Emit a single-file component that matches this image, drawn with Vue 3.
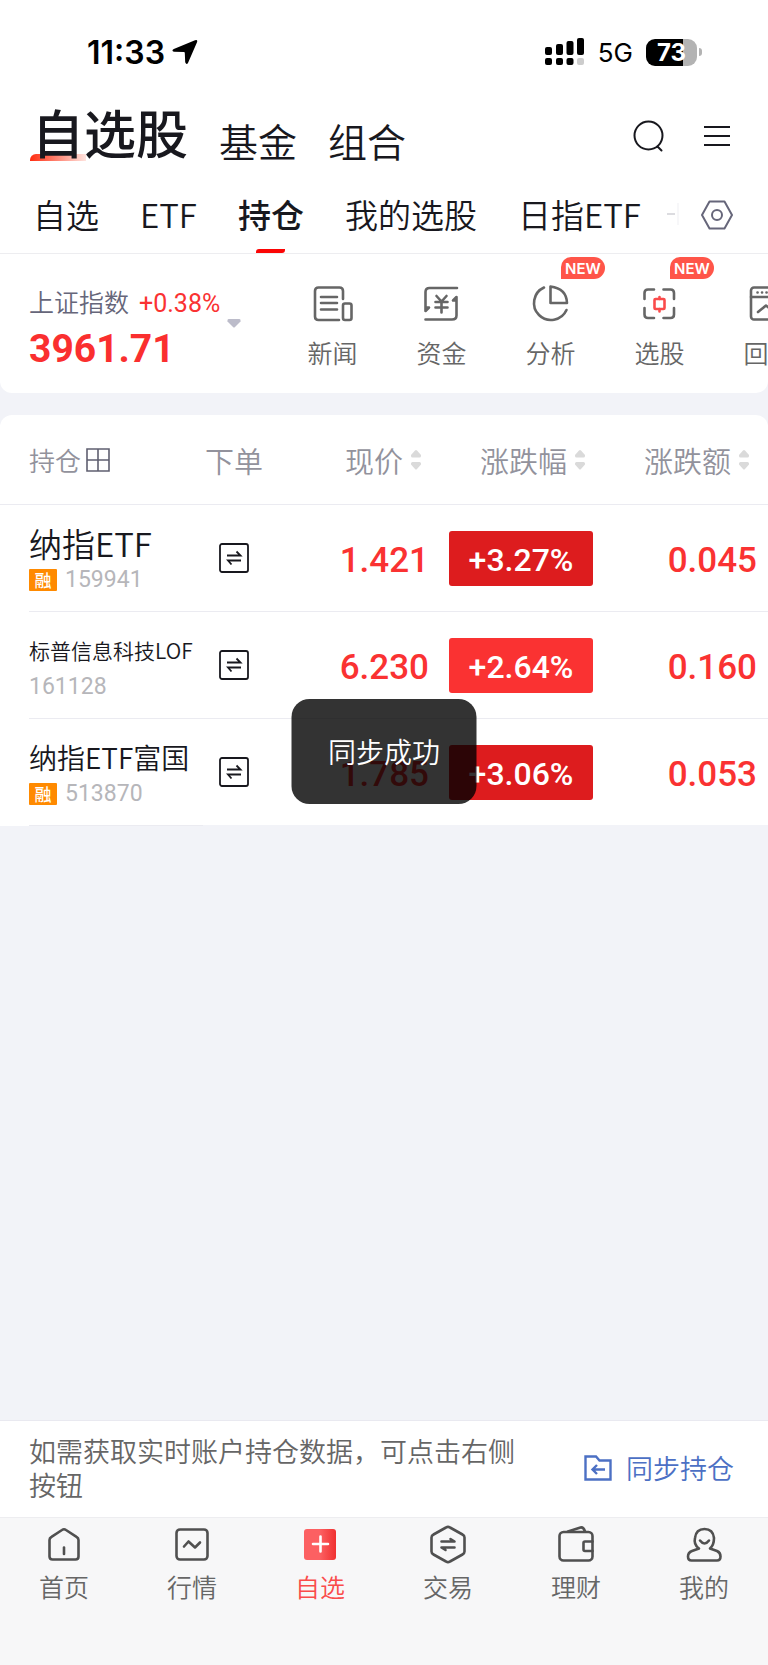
<script setup>
import { ref } from 'vue'

const markets = ['自选股', '基金', '组合']
const groups = ['自选', 'ETF', '持仓', '我的选股', '日指ETF']
const activeMarket = ref('自选股')
const activeGroup = ref('持仓')
const activeNav = ref('自选')

const tools = [
  { name: '新闻', icon: 'news' },
  { name: '资金', icon: 'fund' },
  { name: '分析', icon: 'pie', fresh: true },
  { name: '选股', icon: 'pick', fresh: true },
  { name: '回测', icon: 'test' },
]

const sortable = ['现价', '涨跌幅', '涨跌额']

const holdings = [
  { name: '纳指ETF', size: 'large', margin: true, code: '159941', price: '1.421', rate: '+3.27%', diff: '0.045', deep: true },
  { name: '标普信息科技LOF', size: 'small', margin: false, code: '161128', price: '6.230', rate: '+2.64%', diff: '0.160', deep: false },
  { name: '纳指ETF富国', size: 'medium', margin: true, code: '513870', price: '1.785', rate: '+3.06%', diff: '0.053', deep: true },
]

const navs = ['首页', '行情', '自选', '交易', '理财', '我的']
</script>

<template>
  <div class="page">
    <header class="top">
      <div class="status">
        <div class="clock">
          <span>11:33</span>
          <svg width="26" height="26" viewBox="0 0 26 26"><path d="M23 1.200Q26 .4 25 3.200L16.200 23.400Q14.600 26.500 13.200 23.200L12.800 14Q12.700 13.200 12 13.100L2 12.800Q-1 11.800 1.800 9.900Z" fill="#000" /></svg>
        </div>
        <div class="radio">
          <svg width="40" height="28" viewBox="0 0 40 28">
            <g fill="#000">
              <rect x="0" y="9" width="7" height="8" rx="2" /><rect x="11" y="6" width="7" height="11" rx="2" />
              <rect x="21.500" y="3" width="7" height="14" rx="2" /><rect x="32" y="0" width="7" height="17" rx="2" />
              <rect x="0" y="20" width="7" height="7" rx="2" /><rect x="11" y="20" width="7" height="7" rx="2" /><rect x="21.500" y="20" width="7" height="7" rx="2" />
            </g>
            <rect x="32" y="20" width="7" height="7" rx="2" fill="#ccc" />
          </svg>
          <span class="network">5G</span>
          <span class="battery">73</span>
        </div>
      </div>

      <div class="markets">
        <button v-for="m in markets" :key="m" type="button" class="market" :class="{ on: m === activeMarket }" @click="activeMarket = m"><span>{{ m }}</span></button>
        <button type="button" class="icon-button search" aria-label="搜索">
          <svg width="32" height="34" viewBox="0 0 32 34" fill="none" stroke="#18181e" stroke-width="2" stroke-linecap="round"><circle cx="15.500" cy="16.500" r="14" /><path d="M24.500 27.500L28.500 31.500" /></svg>
        </button>
        <button type="button" class="icon-button" aria-label="菜单">
          <svg width="26" height="22" viewBox="0 0 26 22" stroke="#18181e" stroke-width="2"><path d="M0 2H26M0 11H26M0 20H26" /></svg>
        </button>
      </div>

      <nav class="groups">
        <button v-for="g in groups" :key="g" type="button" class="group" :class="{ on: g === activeGroup }" @click="activeGroup = g">{{ g }}</button>
        <svg class="more" width="14" height="26" viewBox="0 0 14 26"><path d="M1 13H9" stroke="#dcdce0" stroke-width="2" /><path d="M12 2V24" stroke="#f5f5f7" stroke-width="1.500" /></svg>
        <button type="button" class="icon-button" aria-label="设置">
          <svg width="32" height="30" viewBox="0 0 32 30" fill="none" stroke="#66667a" stroke-width="2" stroke-linejoin="round"><path d="M8.500 1.500H23.500L31 15L23.500 28.500H8.500L1 15Z" /><circle cx="16" cy="15" r="5" /></svg>
        </button>
      </nav>
    </header>

    <section class="overview">
      <button type="button" class="quote">
        <span class="quote-text">
          <span class="quote-head"><span>上证指数</span><span class="quote-rate">+0.38%</span></span>
          <strong>3961.71</strong>
        </span>
        <svg class="caret" width="14" height="9" viewBox="0 0 14 9"><path d="M1.500 0H12.500Q14 .3 13.500 2.500L8 8Q7 9 6 8L.5 2.500Q0 .3 1.500 0Z" fill="#bcbcca" /></svg>
      </button>
      <div class="tools">
        <button v-for="t in tools" :key="t.name" type="button" class="tool">
          <svg width="40" height="40" viewBox="0 0 40 40" fill="none" stroke="#666" stroke-width="2.600" stroke-linecap="round" stroke-linejoin="round">
            <template v-if="t.icon === 'news'">
              <path d="M30 15V7Q30 3.500 26.500 3.500H5.500Q2 3.500 2 7V32.500Q2 36 5.500 36H26" />
              <path d="M8 13H24M8 19H24M8 25.500H24" />
              <rect x="30" y="19.500" width="8.500" height="16.500" rx="2" />
            </template>
            <template v-else-if="t.icon === 'fund'">
              <path d="M35 4H7.500Q3.500 4 3.500 8V27L7 23.500H3.500M3.500 35.500H30Q34.500 35.500 34.500 31.500V13L31 16.500H34.500" />
              <path d="M14.500 12L19.500 17.500L24.500 12M13.500 18H25.500M13.500 23.500H25.500M19.500 18V28.500" />
            </template>
            <template v-else-if="t.icon === 'pie'">
              <path d="M13 3.500A17 17 0 1 0 35.500 26" /><path d="M19.500 2.500V19H36Q35.500 4.500 19.500 2.500Z" />
            </template>
            <template v-else-if="t.icon === 'pick'">
              <path d="M4.500 15V9Q4.500 5.500 8 5.500H14M23.500 5.500H30.500Q34 5.500 34 9V15M34 24V30.500Q34 34 30.500 34H23.500M14 34H8Q4.500 34 4.500 30.500V24" />
              <g stroke="#fa4b4b"><rect x="14.500" y="15" width="10" height="10" rx="1" /><path d="M19.500 13V15M19.500 25V27.500" /></g>
            </template>
            <template v-else>
              <rect x="2" y="3.500" width="33" height="32" rx="3" /><path d="M2 13H35M9 28L17 21.500L23 26L30 19" />
              <path d="M8.500 8.500H8.600M13 8.500H13.100M17.500 8.500H17.600" />
            </template>
          </svg>
          <span>{{ t.name }}</span>
          <em v-if="t.fresh" class="fresh">NEW</em>
        </button>
      </div>
    </section>

    <section class="holdings">
      <table>
        <colgroup><col /><col class="col-order" /><col class="col-num" /><col class="col-num" /><col class="col-num" /><col class="col-end" /></colgroup>
        <thead>
          <tr>
            <th scope="col" class="th-name">
              <button type="button">持仓<svg width="24" height="24" viewBox="0 0 24 24" fill="none" stroke="#5f5f70" stroke-width="1.600"><path d="M1 1H23V23H1ZM12 1V23M1 12H23" /></svg></button>
            </th>
            <th scope="col" class="th-order">下单</th>
            <th v-for="s in sortable" :key="s" scope="col" class="th-num">
              <button type="button">{{ s }}<svg width="10" height="20" viewBox="0 0 10 20" fill="#dadada"><path d="M5 0Q5.500 0 6 .5L10 5V6Q10 7.500 8.500 7.500H1.500Q0 7.500 0 6V5L4 .5Q4.500 0 5 0ZM5 19.500Q5.500 19.500 6 19L10 14.500V13.500Q10 12 8.500 12H1.500Q0 12 0 13.500V14.500L4 19Q4.500 19.500 5 19.500Z" /></svg></button>
            </th>
            <td></td>
          </tr>
        </thead>
        <tbody>
          <tr v-for="h in holdings" :key="h.code">
            <td class="stock">
              <div class="name" :class="h.size">{{ h.name }}</div>
              <div class="code"><i v-if="h.margin">融</i>{{ h.code }}</div>
            </td>
            <td class="order">
              <button type="button" class="icon-button" :aria-label="'下单 ' + h.name">
                <svg width="30" height="30" viewBox="0 0 30 30" fill="none" stroke="#18181e" stroke-width="1.800"><rect x="1" y="1" width="28" height="28" rx="2" /><path d="M8 12.500H21.500L17.500 8.500M22 17.500H9L12.500 21.500" /></svg>
              </button>
            </td>
            <td class="num">{{ h.price }}</td>
            <td class="num-rate"><span class="rate" :class="{ deep: h.deep }">{{ h.rate }}</span></td>
            <td class="num">{{ h.diff }}</td>
            <td></td>
          </tr>
        </tbody>
      </table>
    </section>

    <footer class="bottom">
      <div class="notice">
        <p>如需获取实时账户持仓数据，可点击右侧按钮</p>
        <button type="button" class="sync">
          <svg width="28" height="26" viewBox="0 0 28 26" fill="none" stroke="#4c70c4" stroke-width="2.400"><path d="M1.500 1.500H12L15.500 5.500H26.500V24.500H1.500ZM21 14.500H9M13 10L8.500 14.500L13 19" /></svg>
          <span>同步持仓</span>
        </button>
      </div>
      <nav class="navs">
        <a v-for="n in navs" :key="n" href="#" :class="{ on: n === activeNav }" @click.prevent="activeNav = n">
          <svg width="40" height="40" viewBox="0 0 40 40" fill="none" stroke="#505050" stroke-width="2.600" stroke-linecap="round" stroke-linejoin="round">
            <template v-if="n === '首页'"><path d="M5.500 15Q5.500 13 7.500 11.800L18 5Q20 3.500 22 5L32.500 11.800Q34.500 13 34.500 15V31.500Q34.500 34.500 31.500 34.500H8.500Q5.500 34.500 5.500 31.500Z" /><path d="M20 22.500V29" /></template>
            <template v-else-if="n === '行情'"><rect x="4.500" y="4.500" width="31" height="30" rx="3.500" /><path d="M12 21.500L16.500 16.500L23 22.500L28 17.500" /></template>
            <template v-else-if="n === '自选'">
              <defs><linearGradient id="plus-fill"><stop offset="0.500" stop-color="#fc6062" /><stop offset="1" stop-color="#f03030" /></linearGradient></defs>
              <rect x="4" y="4" width="32" height="31" rx="3" fill="url(#plus-fill)" stroke="none" /><path d="M13 19H28M20.500 11.500V26.500" stroke="#fff" />
            </template>
            <template v-else-if="n === '交易'"><path d="M18 2.500Q20 1.200 22 2.500L34.500 9.500Q36.500 10.500 36.500 12.500V26.500Q36.500 28.500 34.500 29.500L22 36.500Q20 37.800 18 36.500L5.500 29.500Q3.500 28.500 3.500 26.500V12.500Q3.500 10.500 5.500 9.500Z" /><path d="M13.500 16.500H26.500L22.500 14M26.500 22.500H13.500L17.500 25" /></template>
            <template v-else-if="n === '理财'"><rect x="3.500" y="7" width="33" height="28.500" rx="4" /><path d="M36.500 16.500H29Q27.500 16.500 27.500 18V24.500Q27.500 26 29 26H36.500M12 6.500L24.500 2.500Q27.500 1.800 29 6.500" /></template>
            <template v-else><path d="M15 23.500A10 10 0 0 1 11 13Q12 4 20.500 4Q29 4 30 13Q30 20 26 23.500M15 23.500L8 26Q4 27.500 4 31.500Q4 35.500 7.500 35.500H33Q36.500 35.500 36.500 31.500Q36.500 27.500 33 26L26 23.500M16 15.500Q20.500 21.500 25 15.500" /></template>
          </svg>
          <span>{{ n }}</span>
        </a>
      </nav>
    </footer>

    <div class="toast" role="status">同步成功</div>
  </div>
</template>

<style>
body {
  margin: 0;
  background: #f2f3f8;
}
</style>

<style scoped>
.page {
  position: relative;
  display: flex;
  flex-direction: column;
  min-height: 100vh;
  overflow: hidden;
  background: #f2f3f8;
  color: #18181e;
  font-family: "Noto Sans CJK SC", sans-serif;
  font-weight: 350;
}
button {
  padding: 0;
  border: 0;
  background: none;
  color: inherit;
  font: inherit;
  cursor: pointer;
}
svg {
  display: block;
  flex: none;
}
.top {
  background: #fff;
  border-bottom: 1px solid #ededf0;
}
.status {
  display: flex;
  justify-content: space-between;
  align-items: center;
  height: 104px;
  padding: 0 71px 0 87px;
  color: #000;
  font-family: Inter, sans-serif;
}
.clock {
  display: flex;
  align-items: center;
  gap: 7px;
  font-size: 32px;
  font-weight: 600;
}
.radio {
  display: flex;
  align-items: center;
  gap: 13px;
}
.network {
  font-size: 26px;
  font-weight: 400;
}
.battery {
  position: relative;
  display: flex;
  align-items: center;
  justify-content: center;
  width: 51px;
  height: 27px;
  border-radius: 9px;
  background: linear-gradient(90deg, #000 73%, #b3b3b3 73%);
  color: #fff;
  font-size: 24px;
  font-weight: 700;
}
.battery::after {
  content: "";
  position: absolute;
  left: 53px;
  width: 3px;
  height: 8px;
  border-radius: 0 4px 4px 0;
  background: #b3b3b3;
}
.markets {
  display: flex;
  align-items: flex-end;
  gap: 31px;
  padding: 0 38px 0 32px;
}
.market {
  font-size: 39px;
  line-height: 40px;
}
.market.on {
  position: relative;
  font-size: 52px;
  font-weight: 500;
  line-height: 56px;
}
.market.on::before {
  content: "";
  position: absolute;
  bottom: -1px;
  left: -2px;
  width: 56px;
  height: 7px;
  border-radius: 6px 0 0 0;
  background: linear-gradient(90deg, #ff2d10, #ffe4df);
}
.market span {
  position: relative;
}
.icon-button {
  display: flex;
  align-items: center;
  justify-content: center;
}
.markets .icon-button {
  height: 48px;
}
.search {
  margin-left: auto;
  margin-right: 8px;
}
.groups {
  display: flex;
  align-items: center;
  gap: 41px;
  height: 79px;
  margin-top: 14px;
  padding: 0 34px 0 33px;
}
.group {
  position: relative;
  height: 79px;
  font-size: 33px;
  line-height: 81px;
  white-space: nowrap;
}
.group.on {
  font-weight: 500;
}
.group.on::after {
  content: "";
  position: absolute;
  bottom: 0;
  left: 18px;
  width: 29px;
  height: 4px;
  border-radius: 3px 0 3px 0;
  background: #fb0505;
}
.more {
  margin-left: -16px;
}
.groups .icon-button {
  margin-left: -20px;
  padding-top: 3px;
}
.overview {
  display: flex;
  height: 139px;
  border-radius: 0 0 12px 12px;
  background: #fff;
  overflow: hidden;
}
.quote {
  display: flex;
  flex: none;
  align-items: flex-start;
  width: 278px;
  padding: 32px 0 0 29px;
  text-align: left;
}
.quote-text {
  display: flex;
  flex-direction: column;
  gap: 10px;
  width: 198px;
}
.quote-head {
  display: flex;
  align-items: baseline;
  gap: 10px;
  height: 30px;
  color: #66667a;
  font-size: 25px;
  line-height: 30px;
  white-space: nowrap;
}
.quote-rate {
  color: #fa3232;
  font-family: Roboto, sans-serif;
  font-weight: 400;
}
.quote strong {
  color: #fa2f2f;
  font: 700 39px/46px Roboto, sans-serif;
}
.caret {
  margin-top: 33px;
}
.tools {
  display: flex;
  flex: 1;
  min-width: 0;
}
.tool {
  position: relative;
  display: flex;
  flex: none;
  flex-direction: column;
  align-items: center;
  gap: 13px;
  width: 109px;
  padding-top: 30px;
  color: #666;
  font-size: 25px;
  line-height: 30px;
}
.fresh {
  position: absolute;
  top: 3px;
  right: 0;
  width: 44px;
  height: 22px;
  border-radius: 10px 11px 11px 0;
  background: #ff5549;
  color: #fff;
  font: normal 600 15px/23px Inter, sans-serif;
  text-align: center;
}
.holdings {
  margin-top: 22px;
  border-radius: 12px 12px 0 0;
  background: #fff;
}
table {
  width: 100%;
  border-collapse: separate;
  border-spacing: 0;
  table-layout: fixed;
}
.col-order {
  width: 62px;
}
.col-num {
  width: 164px;
}
.col-end {
  width: 11px;
}
th,
td {
  padding: 0;
}
thead tr {
  height: 90px;
}
thead th,
thead td {
  padding-top: 1px;
  border-bottom: 1px solid #ebebf1;
  color: #92929c;
  font-size: 29px;
  font-weight: 350;
  line-height: 36px;
  white-space: nowrap;
}
th button {
  display: inline-flex;
  align-items: center;
  vertical-align: top;
}
thead .th-name {
  padding-left: 29px;
  font-size: 26px;
  text-align: left;
}
.th-name button {
  gap: 5px;
}
thead .th-num {
  padding-right: 8px;
  text-align: right;
}
.th-num button {
  gap: 8px;
}
tbody tr {
  height: 107px;
}
tbody td {
  border-bottom: 1px solid #ebebf1;
}
tbody .stock {
  position: relative;
  padding: 4px 0 0 29px;
  border-bottom: 0;
  white-space: nowrap;
}
.stock::after {
  content: "";
  position: absolute;
  right: 0;
  bottom: 0;
  left: 29px;
  height: 1px;
  background: #ebebf1;
}
tbody tr:last-child td,
tbody tr:last-child .stock::after {
  border-color: #f2f3f8;
}
.name {
  line-height: 38px;
}
.large {
  font-size: 33px;
}
.medium {
  font-size: 28px;
}
.small {
  font-size: 21px;
}
.code {
  display: flex;
  align-items: center;
  gap: 8px;
  height: 36px;
  color: #b6b6ba;
  font: 400 23px/38px Roboto, sans-serif;
}
.code i {
  width: 28px;
  height: 22px;
  border-radius: 1px;
  background: #ff8a00;
  color: #fff;
  font: normal 500 17px/21px "Noto Sans CJK SC", sans-serif;
  text-align: center;
}
.order .icon-button {
  margin: 0 auto;
}
tbody .num {
  padding-top: 6px;
  color: #fa3232;
  font: 500 35px/48px Roboto, sans-serif;
  text-align: right;
}
.rate {
  display: block;
  width: 144px;
  height: 55px;
  margin-left: auto;
  border-radius: 3px;
  background: #fa3232;
  color: #fff;
  font: 500 32px/58px Roboto, sans-serif;
  text-align: center;
}
.rate.deep {
  background: #dd1c1e;
}
.bottom {
  margin-top: auto;
}
.notice {
  display: flex;
  align-items: center;
  justify-content: space-between;
  padding: 13px 34px 15px 29px;
  border-top: 1px solid #e9e9f0;
  background: #fff;
  font-size: 27px;
  line-height: 34px;
}
.notice p {
  flex: 0 1 490px;
  margin: 0;
  color: #666;
}
.sync {
  display: flex;
  flex: none;
  align-items: center;
  gap: 14px;
  color: #4c70c4;
}
.navs {
  display: grid;
  grid-template-columns: repeat(6, 1fr);
  padding: 7px 0 64px;
  border-top: 1px solid #ededf0;
  background: #f7f7f8;
}
.navs a {
  display: flex;
  flex-direction: column;
  align-items: center;
  gap: 6px;
  color: #666;
  font-size: 25px;
  line-height: 30px;
  text-decoration: none;
}
.navs .on {
  color: #fa4b4b;
}
.toast {
  position: absolute;
  top: 699px;
  left: 50%;
  width: 185px;
  border-radius: 18px;
  background: rgba(0, 0, 0, 0.8);
  color: #fff;
  font-size: 28px;
  line-height: 105px;
  text-align: center;
  transform: translateX(-50%);
}
</style>
